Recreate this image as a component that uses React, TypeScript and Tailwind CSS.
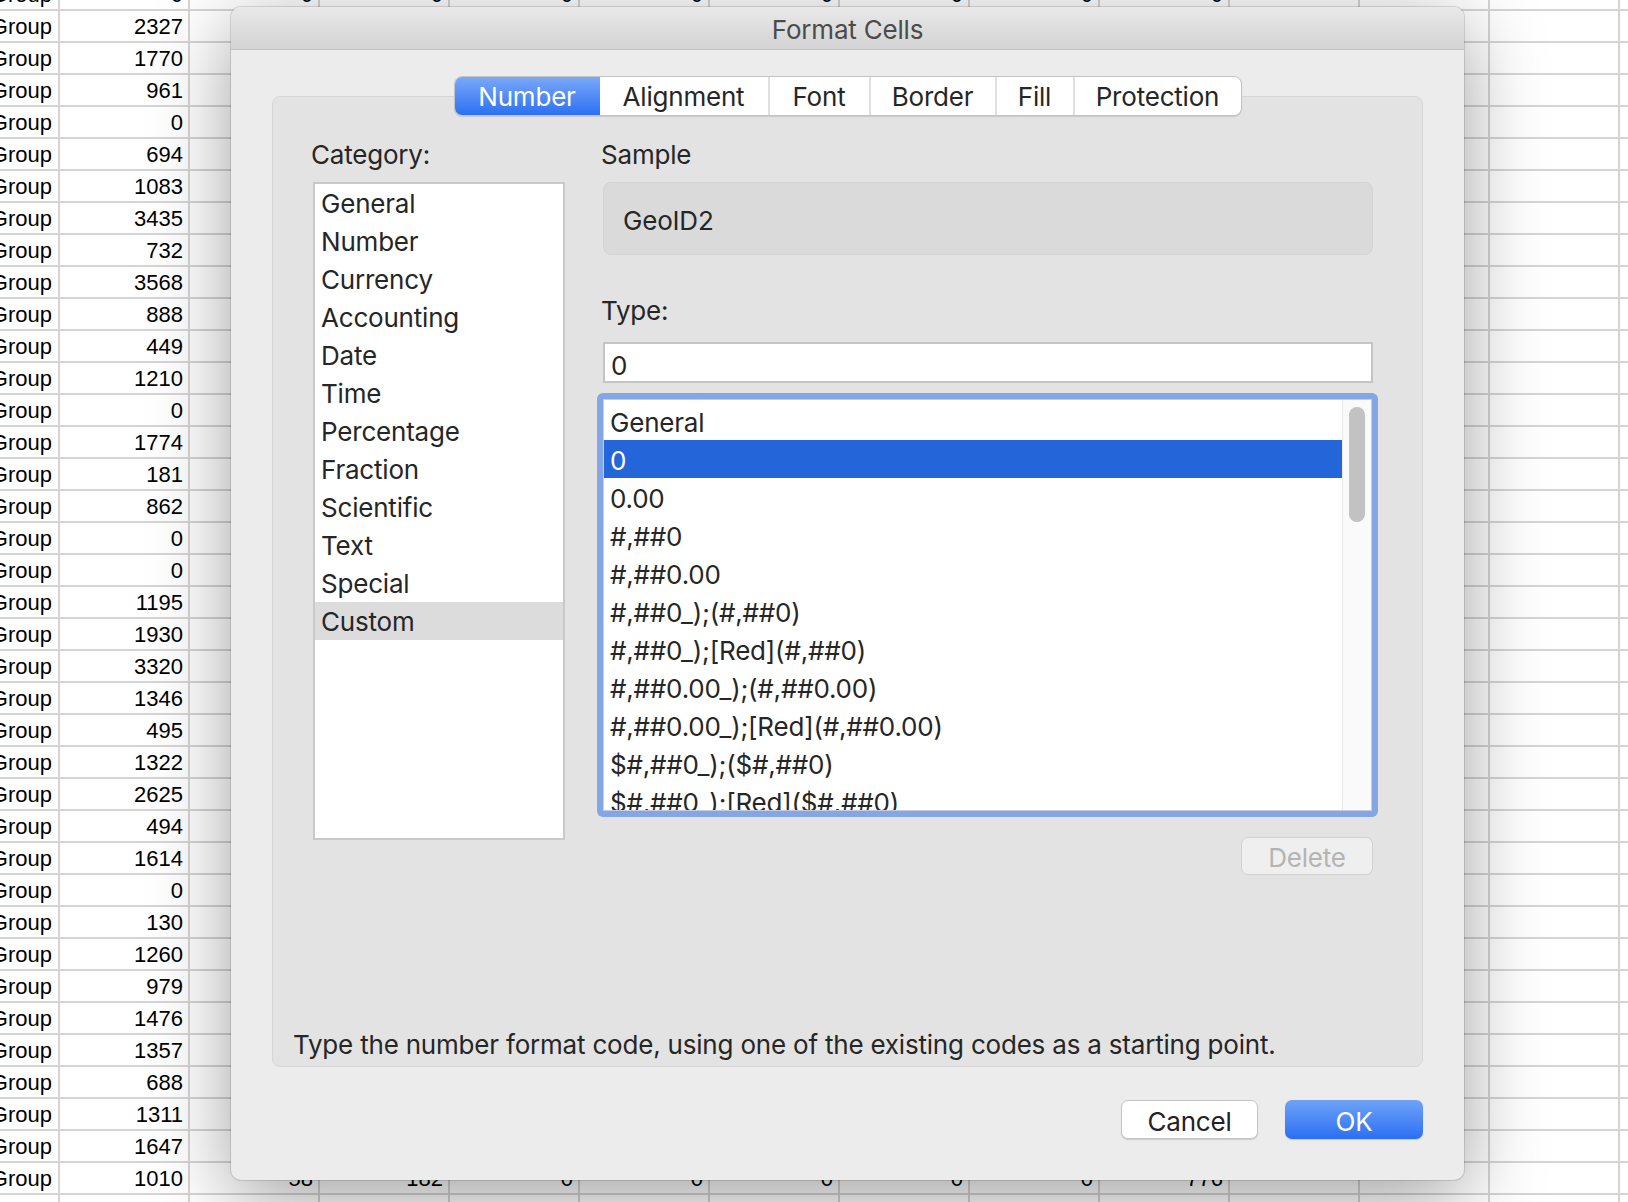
const LEFT_VALUES = [
  2327, 1770, 961, 0, 694, 1083, 3435, 732, 3568, 888, 449, 1210, 0, 1774, 181, 862, 0, 0, 1195,
  1930, 3320, 1346, 495, 1322, 2625, 494, 1614, 0, 130, 1260, 979, 1476, 1357, 688, 1311, 1647, 1010,
];

const CATEGORIES = [
  'General', 'Number', 'Currency', 'Accounting', 'Date', 'Time', 'Percentage',
  'Fraction', 'Scientific', 'Text', 'Special', 'Custom',
];

const FORMATS = [
  'General', '0', '0.00', '#,##0', '#,##0.00', '#,##0_);(#,##0)', '#,##0_);[Red](#,##0)',
  '#,##0.00_);(#,##0.00)', '#,##0.00_);[Red](#,##0.00)', '$#,##0_);($#,##0)',
  '$#,##0_);[Red]($#,##0)', '$#,##0.00_);($#,##0.00)',
];

const TABS = [
  { label: 'Number', w: 'w-[145px]' },
  { label: 'Alignment', w: 'w-[168px]' },
  { label: 'Font', w: 'w-[101px]' },
  { label: 'Border', w: 'w-[126px]' },
  { label: 'Fill', w: 'w-[78px]' },
  { label: 'Protection', w: 'w-[168px]' },
];

const EXTRA_COLS = 12;

function SheetRow({ a, b, rest = [] }: { a?: string; b?: string; rest?: string[] }) {
  return (
    <div className="flex h-[32px] shrink-0 border-b-2 border-[#d5d5d5]">
      <div className="flex h-full w-[60px] shrink-0 justify-end overflow-hidden whitespace-nowrap border-r-2 border-[#d5d5d5] pr-[6px] leading-[31px]">
        {a}
      </div>
      <div className="flex h-full w-[130px] shrink-0 justify-end border-r-2 border-[#d5d5d5] pr-[5px] leading-[31px]">
        {b}
      </div>
      {Array.from({ length: EXTRA_COLS }).map((_, i) => (
        <div
          key={i}
          className="flex h-full w-[130px] shrink-0 justify-end border-r-2 border-[#d5d5d5] pr-[5px] leading-[31px]"
        >
          {rest[i]}
        </div>
      ))}
    </div>
  );
}

function Sheet() {
  const zeros = ['0', '0', '0', '0', '0', '0', '0', '0'];
  return (
    <div className="-mt-[21px] flex flex-col font-['Liberation_Sans',sans-serif] text-[22px] text-black">
      <SheetRow a="Group" b="0" rest={zeros} />
      {LEFT_VALUES.map((v, i) => (
        <SheetRow
          key={i}
          a="Group"
          b={String(v)}
          rest={i === LEFT_VALUES.length - 1 ? ['58', '182', '0', '0', '0', '0', '0', '776'] : []}
        />
      ))}
      <SheetRow />
    </div>
  );
}

function Tabs() {
  return (
    <div className="relative z-10 mt-[26px] flex h-[40px] justify-center">
      <div className="flex overflow-hidden rounded-[8px] border border-[#c4c4c4] bg-white shadow-[0_1px_1px_rgba(0,0,0,0.12)]">
        {TABS.map((t, i) =>
          i === 0 ? (
            <div
              key={t.label}
              className={`${t.w} bg-gradient-to-b from-[#79a8f8] to-[#2c6ff2] pt-[1px] text-center leading-[38px] text-white`}
            >
              {t.label}
            </div>
          ) : (
            <div
              key={t.label}
              className={`${t.w} pt-[1px] text-center leading-[38px] text-[#262626] ${i > 1 ? 'border-l-2 border-[#e0e0e0]' : ''}`}
            >
              {t.label}
            </div>
          ),
        )}
      </div>
    </div>
  );
}

function CategoryList() {
  return (
    <div className="ml-[2px] mt-[12px] h-[658px] w-[252px] border-2 border-[#c9c9c9] bg-white">
      {CATEGORIES.map((c) => (
        <div
          key={c}
          className={`h-[38px] pl-[6px] pt-[2px] leading-[36px] text-[#262626] ${c === 'Custom' ? 'bg-[#dcdcdc]' : ''}`}
        >
          {c}
        </div>
      ))}
    </div>
  );
}

function FormatList() {
  return (
    <div className="-ml-[4px] mt-[10px] h-[424px] w-[781px] rounded-[6px] bg-[#84a6e5] p-[6px]">
      <div className="flex h-full border border-[#c3cde2] bg-white">
        <div className="flex-1 overflow-hidden pt-[2px]">
          {FORMATS.map((f) => (
            <div
              key={f}
              className={`h-[38px] whitespace-nowrap pl-[6px] pt-[3px] leading-[35px] ${f === '0' ? 'bg-[#2466d9] text-white' : 'text-[#262626]'}`}
            >
              {f}
            </div>
          ))}
        </div>
        <div className="w-[29px] border-l border-[#e8e8e8] bg-[#fafafa] px-[6px] pt-[7px]">
          <div className="h-[115px] w-[16px] rounded-full bg-[#c2c2c2]" />
        </div>
      </div>
    </div>
  );
}

function Dialog() {
  return (
    <div className="absolute left-[231px] top-[7px] flex h-[1173px] w-[1233px] flex-col overflow-hidden rounded-[10px] bg-[#ececec] font-['Inter','Liberation_Sans',sans-serif] text-[26px] tracking-[-0.2px] shadow-[0_18px_80px_rgba(0,0,0,0.38),0_0_0_1px_rgba(0,0,0,0.12)]">
      <div className="flex h-[43px] shrink-0 items-center justify-center border-b border-[#c2c2c2] bg-gradient-to-b from-[#e9e9e9] to-[#d3d3d3] pt-[2px] text-[#4b4b4b]">
        Format Cells
      </div>
      <div className="flex flex-1 flex-col px-[41px]">
        <Tabs />
        <div className="-mt-[20px] flex h-[971px] flex-col rounded-[8px] border border-[#d6d6d6] bg-[#e3e3e3]">
          <div className="flex pl-[38px] pt-[41px]">
            <div className="w-[254px]">
              <div className="h-[32px] pt-[1px] leading-[32px] text-[#262626]">Category:</div>
              <CategoryList />
            </div>
            <div className="ml-[36px] flex w-[772px] flex-col">
              <div className="h-[32px] pt-[1px] leading-[32px] text-[#262626]">Sample</div>
              <div className="ml-[2px] mt-[12px] flex h-[73px] w-[770px] items-center rounded-[8px] border border-[#d3d3d3] bg-[#dadada] pl-[19px] pt-[3px] text-[#262626]">
                GeoID2
              </div>
              <div className="mt-[39px] h-[32px] pt-[1px] leading-[32px] text-[#262626]">Type:</div>
              <div className="ml-[2px] mt-[16px] flex h-[41px] w-[770px] items-center border-2 border-[#c4c4c4] bg-white pl-[6px] pt-[6px] text-[#262626]">
                0
              </div>
              <FormatList />
              <div className="mt-[20px] flex h-[38px] w-[132px] items-center justify-center self-end rounded-[7px] border border-[#d0d0d0] bg-[#efefef] pt-[2px] text-[#b4b4b4]">
                Delete
              </div>
            </div>
          </div>
          <div className="mt-auto pb-[5px] pl-[20px] leading-[32px] text-[#262626]">
            Type the number format code, using one of the existing codes as a starting point.
          </div>
        </div>
        <div className="mt-[33px] flex justify-end gap-[27px]">
          <div className="flex h-[39px] w-[137px] items-center justify-center rounded-[7px] border border-[#c6c6c6] bg-white pt-[3px] text-[#222222] shadow-[0_1px_1px_rgba(0,0,0,0.15)]">
            Cancel
          </div>
          <div className="flex h-[39px] w-[138px] items-center justify-center rounded-[7px] bg-gradient-to-b from-[#6ea3f8] to-[#2b6ef2] pt-[3px] text-white shadow-[0_1px_1px_rgba(0,0,0,0.15)]">
            OK
          </div>
        </div>
      </div>
    </div>
  );
}

export default function App() {
  return (
    <div className="relative h-[1202px] w-[1628px] overflow-hidden bg-white">
      <Sheet />
      <Dialog />
    </div>
  );
}
